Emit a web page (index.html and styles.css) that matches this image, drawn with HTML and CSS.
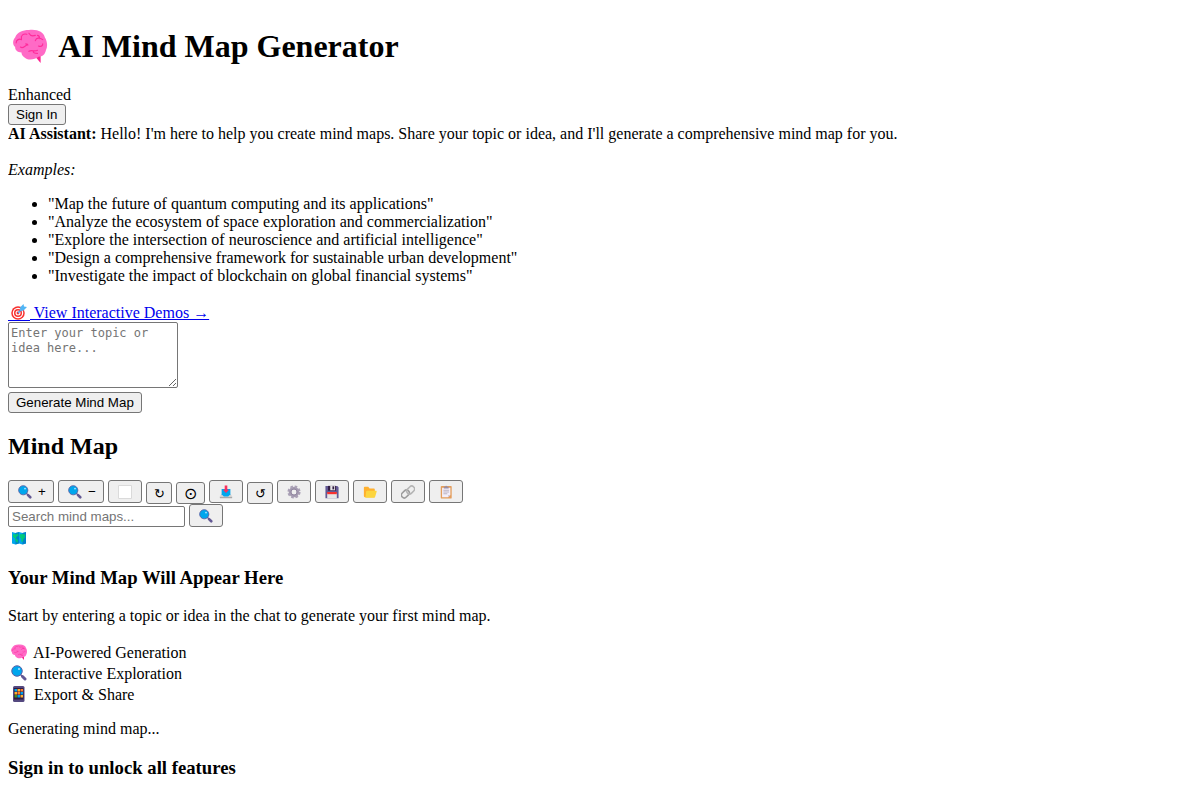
FILE: index.html
```html
<!DOCTYPE html>
<html lang="en">
<head>
<meta charset="utf-8">
<title>AI Mind Map Generator</title>
<link rel="stylesheet" href="styles.css">
</head>
<body>
<svg class="sprite" aria-hidden="true">
  <symbol id="brain" viewBox="0 0 32 32">
    <path fill="#ff1f8f" d="M20 25l6 7V24z"/>
    <path fill="#ff6ac6" d="M15 1c8-1 14 2 15 7 2 3 3 8 1 12-1 4-3 6-7 6-4 3-10 4-14 0-1-1-2-2-2-4-4 0-6-2-6-5C-1 14 0 10 2 8 4 3 9 1 15 1z"/>
    <path fill="none" stroke="#ff2c9b" stroke-width="1.100" stroke-linecap="round" d="M3 13c0-3 3-4 5-3M8 9c-1-3 2-5 5-4M15 4c1 2 3 3 6 2M7 17c3 2 4-2 7-2M21 11c1-3 4-3 7-1M25 9c0-2-1-3-2-3M15 21c3-2 5 1 8-1M19 21c0 2 2 2 4 2M28 14c0 2-2 3-4 2M12 14c2 0 2 1 2 1"/>
  </symbol>
  <symbol id="target" viewBox="0 0 32 32">
    <circle cx="14" cy="18" r="13.5" fill="#f8312f"/>
    <circle cx="14" cy="18" r="10.5" fill="#fff"/>
    <circle cx="14" cy="18" r="8" fill="#f8312f"/>
    <circle cx="14" cy="18" r="5" fill="#fff"/>
    <circle cx="14" cy="18" r="2.8" fill="#f8312f"/>
    <path stroke="#46a4fb" stroke-width="2.5" d="M14 18L25 7"/>
    <path fill="#50b5f5" d="M18 7l7-7 1 5 6 1-7 7-6 1z"/>
  </symbol>
  <symbol id="lens" viewBox="0 0 32 32">
    <path stroke="#635994" stroke-width="3" d="M18 18l5 5"/>
    <path stroke="#635994" stroke-width="6" stroke-linecap="round" d="M23 23l5 5"/>
    <circle cx="12" cy="12" r="10.5" fill="#00a6ed" stroke="#5b61a6" stroke-width="2"/>
    <circle cx="16" cy="8" r="2" fill="#b4e5ff"/>
  </symbol>
  <symbol id="square" viewBox="0 0 32 32">
    <rect x="1" y="1" width="30" height="30" rx="1" fill="#fff" stroke="#d3d3d3" stroke-width="2"/>
  </symbol>
  <symbol id="inbox" viewBox="0 0 32 32">
    <path fill="#d3d3d3" d="M5 21h22l3 5v4H2v-4z"/>
    <path fill="#9b9b9b" d="M2 28h28v2H2z"/>
    <path fill="#00a6ed" d="M6 9h20v12l-5 5H11l-5-5z"/>
    <path fill="#f8315f" d="M13 1h6v10h4l-7 7-7-7h4z"/>
  </symbol>
  <symbol id="gear" viewBox="0 0 32 32">
    <circle cx="16" cy="16" r="13" fill="none" stroke="#aaa1b6" stroke-width="4" stroke-dasharray="6.1 4.11"/>
    <circle cx="16" cy="16" r="9" fill="none" stroke="#a59bb1" stroke-width="6"/>
    <circle cx="16" cy="16" r="7" fill="none" stroke="#8d819c" stroke-width="2"/>
  </symbol>
  <symbol id="floppy" viewBox="0 0 32 32">
    <path fill="#635994" d="M1 2h27l3 3v25H1z"/>
    <path fill="#321b41" d="M7 2h18v11H7z"/>
    <path fill="#e6e6e6" d="M12 2h11v10H12zM5 18h22v12H5z"/>
    <path fill="#321b41" d="M17 3h4v7h-4z"/>
    <path fill="#f8312f" d="M5 16h22v5H5z"/>
  </symbol>
  <symbol id="folder" viewBox="0 0 32 32">
    <path fill="#ffb02e" d="M2 6q0-2 2-2h8l3 4h10q2 0 2 3v17H5q-3 0-3-3z"/>
    <path fill="#fcd53f" d="M9 13h21q2 0 1 3l-3 10q-1 3-3 3H4q2 0 2-3l1-11q1-2 2-2z"/>
  </symbol>
  <symbol id="link" viewBox="0 0 32 32">
    <g fill="none" stroke-width="3.500">
      <rect x="0" y="14" width="20" height="13" rx="6.500" transform="rotate(-45 10 20.500)" stroke="#9b9b9b"/>
      <rect x="12" y="5" width="20" height="13" rx="6.500" transform="rotate(-45 22 11.500)" stroke="#b4b4b4"/>
    </g>
  </symbol>
  <symbol id="clipboard" viewBox="0 0 32 32">
    <rect x="4" y="2" width="25" height="29" rx="2" fill="#e39d5b"/>
    <path fill="#f3eef8" d="M7 6h19v17l-5 5H7z"/>
    <path fill="#cdc4d6" d="M21 28v-5h5z"/>
    <path fill="#998ea4" d="M11 4h3q2-5 5 0h3v4H11z"/>
    <path stroke="#b4acbc" stroke-width="2" d="M10 12h13M10 16h13M10 20h9"/>
  </symbol>
  <symbol id="map" viewBox="0 0 32 32">
    <path fill="#00a6ed" d="M2 4l7 2 7-2 7 2 7-2v23l-7 2-7-2-7 2-7-2z"/>
    <path fill="#0074ba" d="M9 6l7-2v23l-7 2zM23 6l7-2v23l-7 2z" opacity=".7"/>
    <path fill="#00d26a" d="M4 8l5 1 5-2 1 4-4 3-1 3 4 3-1 6-4-4-1-5-4-3zM17 9l6-1 5 1v6l-3 3-1 5-3 1-1-7-3-2z" opacity=".85"/>
  </symbol>
  <symbol id="phone" viewBox="0 0 32 32">
    <rect x="4" y="0" width="23" height="32" rx="3" fill="#54487f"/>
    <rect x="6" y="4" width="19" height="23" fill="#321b41"/>
    <path fill="#00a6ed" d="M7 6h5v5H7zM19 12h5v5h-5zM13 18h5v5h-5z"/>
    <path fill="#ffb02e" d="M13 6h5v5h-5zM7 12h5v5H7zM19 18h5v5h-5z"/>
    <path fill="#ff822d" d="M19 6h5v5h-5zM13 12h5v5h-5z"/>
    <path fill="#44911b" d="M7 18h5v5H7z"/>
  </symbol>
</svg>

<header>
  <h1 class="title"><svg class="emoji-title"><use href="#brain"/></svg> AI Mind Map Generator</h1>
  <div>Enhanced</div>
  <button type="button" class="btn">Sign In</button>
</header>

<main>
  <section>
    <div><strong>AI Assistant:</strong> Hello! I'm here to help you create mind maps. Share your topic or idea, and I'll generate a comprehensive mind map for you.</div>
    <div class="examples"><em>Examples:</em></div>
    <ul class="example-list">
      <li>"Map the future of quantum computing and its applications"</li>
      <li>"Analyze the ecosystem of space exploration and commercialization"</li>
      <li>"Explore the intersection of neuroscience and artificial intelligence"</li>
      <li>"Design a comprehensive framework for sustainable urban development"</li>
      <li>"Investigate the impact of blockchain on global financial systems"</li>
    </ul>
    <div class="line"><a class="demos" href="#demos"><svg class="emoji"><use href="#target"/></svg> View Interactive Demos →</a></div>
    <textarea class="topic" aria-label="Topic" placeholder="Enter your topic or idea here..."></textarea>
    <button type="button" class="btn">Generate Mind Map</button>
  </section>

  <section>
    <h2 class="section-title">Mind Map</h2>
    <div class="toolbar actions">
      <button type="button" class="btn tall zoom" aria-label="Zoom in"><svg class="emoji-btn"><use href="#lens"/></svg> +</button>
      <button type="button" class="btn tall zoom" aria-label="Zoom out"><svg class="emoji-btn"><use href="#lens"/></svg> −</button>
      <button type="button" class="btn tall" aria-label="Fit"><svg class="emoji-btn"><use href="#square"/></svg></button>
      <button type="button" class="btn symbol" aria-label="Rotate">↻</button>
      <button type="button" class="btn symbol ring" aria-label="Center">⊙</button>
      <button type="button" class="btn tall" aria-label="Download"><svg class="emoji-btn"><use href="#inbox"/></svg></button>
      <button type="button" class="btn symbol" aria-label="Reset">↺</button>
      <button type="button" class="btn tall" aria-label="Settings"><svg class="emoji-btn"><use href="#gear"/></svg></button>
      <button type="button" class="btn tall" aria-label="Save"><svg class="emoji-btn"><use href="#floppy"/></svg></button>
      <button type="button" class="btn tall" aria-label="Open"><svg class="emoji-btn"><use href="#folder"/></svg></button>
      <button type="button" class="btn tall" aria-label="Share"><svg class="emoji-btn"><use href="#link"/></svg></button>
      <button type="button" class="btn tall" aria-label="Templates"><svg class="emoji-btn"><use href="#clipboard"/></svg></button>
    </div>
    <div class="toolbar">
      <input type="text" class="search" aria-label="Search mind maps" placeholder="Search mind maps...">
      <button type="button" class="btn tall" aria-label="Search"><svg class="emoji-btn"><use href="#lens"/></svg></button>
    </div>
    <div class="line"><svg class="emoji"><use href="#map"/></svg></div>
    <h3 class="subtitle">Your Mind Map Will Appear Here</h3>
    <p>Start by entering a topic or idea in the chat to generate your first mind map.</p>
    <div class="line"><svg class="emoji"><use href="#brain"/></svg> AI-Powered Generation</div>
    <div class="line"><svg class="emoji"><use href="#lens"/></svg> Interactive Exploration</div>
    <div class="line"><svg class="emoji"><use href="#phone"/></svg> Export &amp; Share</div>
    <p>Generating mind map...</p>
    <h3 class="subtitle">Sign in to unlock all features</h3>
  </section>
</main>
</body>
</html>
```
FILE: styles.css
```css
body {
  margin: 0 8px 8px;
  font: 16px/18px "Liberation Serif", serif;
  color: #000;
  background: #fff;
}

.sprite {
  display: none;
}

.title {
  margin: 0;
  padding: 24px 0 18px;
  font-size: 32px;
  line-height: 44px;
}

.emoji-title {
  width: 36px;
  height: 34px;
  padding: 0 4px;
  vertical-align: -6px;
}

.emoji {
  width: 16px;
  height: 16px;
  padding: 0 3px;
  vertical-align: -2px;
}

.emoji-btn {
  width: 14px;
  height: 14px;
  padding: 0 2px;
  vertical-align: -3px;
}

.btn {
  display: block;
  height: 21px;
  padding: 0 7px;
  border: 1px solid #767676;
  border-radius: 3px;
  background: #efefef;
  color: #000;
  font-family: "Liberation Sans", sans-serif;
}

.tall {
  height: 23px;
}

.zoom {
  min-width: 46px;
}

.symbol {
  width: 26px;
  height: 22px;
  padding: 0;
}

.ring {
  width: 29px;
  font-size: 16px;
}

.examples {
  margin-top: 18px;
}

.example-list {
  margin: 16px 0;
  padding-left: 40px;
}

.line {
  padding-top: 2px;
  line-height: 19px;
}

.demos .emoji {
  border-bottom: 1px solid;
  vertical-align: -3px;
}

.topic {
  display: block;
  box-sizing: border-box;
  width: 170px;
  height: 66px;
  margin: 0 0 4px;
  padding: 3px 2px 2px;
  border: 1px solid #767676;
  border-radius: 2px;
  font: 12px/15px "DejaVu Sans Mono", monospace;
}

.section-title {
  margin: 20px 0;
  font-size: 24px;
  line-height: 27px;
}

.toolbar {
  display: flex;
  flex-wrap: wrap;
  align-items: flex-end;
  gap: 4px;
}

.actions .tall {
  margin-bottom: 1px;
}

.search {
  box-sizing: border-box;
  width: 177px;
  height: 21px;
  padding: 1px 3px;
  border: 1px solid #767676;
  border-radius: 2px;
  font-family: "Liberation Sans", sans-serif;
}

.subtitle {
  margin: 19px 0;
  line-height: 21px;
}

p {
  margin: 16px 0;
}
```
